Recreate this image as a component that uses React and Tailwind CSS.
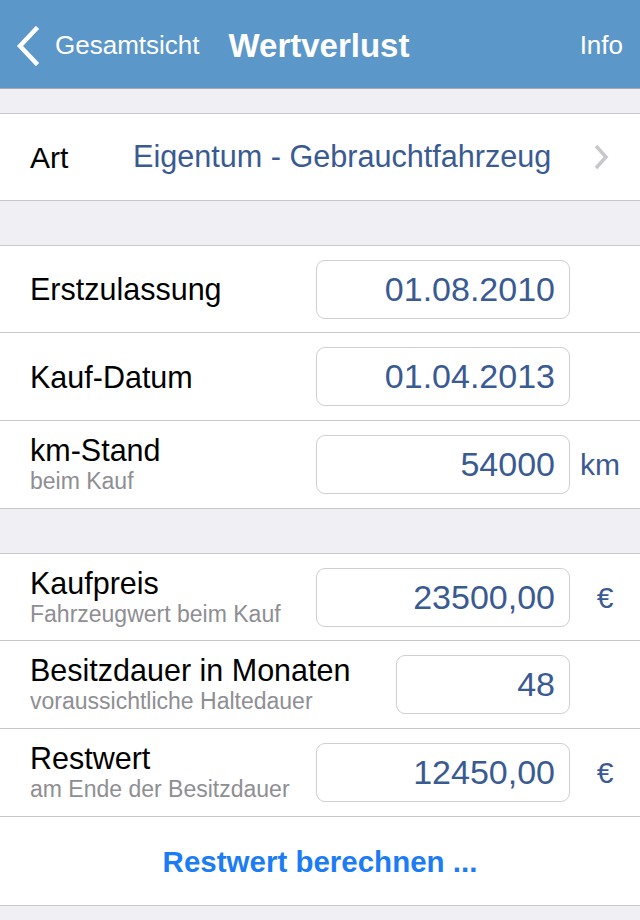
const rowsA = [
  { label: 'Erstzulassung', value: '01.08.2010', h: 'h-[87px]' },
  { label: 'Kauf-Datum', value: '01.04.2013', h: 'h-[88px]' },
  { label: 'km-Stand', sub: 'beim Kauf', value: '54000', unit: 'km', h: 'h-[87px]' },
]

const rowsB = [
  { label: 'Kaufpreis', sub: 'Fahrzeugwert beim Kauf', value: '23500,00', unit: '€', h: 'h-[87px]' },
  { label: 'Besitzdauer in Monaten', sub: 'voraussichtliche Haltedauer', value: '48', narrow: true, h: 'h-[88px]' },
  { label: 'Restwert', sub: 'am Ende der Besitzdauer', value: '12450,00', unit: '€', h: 'h-[88px]' },
]

function BackChevron() {
  return (
    <svg width="28" height="40" viewBox="0 0 28 40" className="shrink-0">
      <path d="M22 3 L6 20 L22 37" fill="none" stroke="#ffffff" strokeWidth="4.5" strokeLinecap="square" />
    </svg>
  )
}

function Row({ row, last }) {
  return (
    <div className={'flex items-center pl-[30px] ' + row.h + (last ? '' : ' border-b border-[#c8c7cc]')}>
      <div className="flex-1 min-w-0">
        <div className="text-[30.5px] leading-[34px] text-black whitespace-nowrap">{row.label}</div>
        {row.sub && (
          <div className="text-[23px] leading-[29px] text-[#8e8e93] whitespace-nowrap">{row.sub}</div>
        )}
      </div>
      <div
        className={
          'h-[59px] rounded-[9px] border border-[#cfcfd3] flex items-center justify-end pr-[14px] text-[34px] text-[#3a5a92] ' +
          (row.narrow ? 'w-[174px]' : 'w-[254px]')
        }
      >
        {row.value}
      </div>
      {row.unit === 'km' ? (
        <div className="w-[70px] pl-[10px] text-[30px] text-[#3a5a92]">km</div>
      ) : (
        <div className="w-[70px] text-center text-[30px] text-[#3a5a92]">{row.unit || ''}</div>
      )}
    </div>
  )
}

export default function App() {
  return (
    <div className="w-[640px] h-[920px] bg-[#efeff4] overflow-hidden font-['Liberation_Sans',Arial,sans-serif]">
      <div className="h-[89px] bg-[#5b97c9] border-b border-[#a9a9ad] flex items-center pt-[3px] pl-[14px] pr-[17px] text-white">
        <BackChevron />
        <span className="ml-[13px] text-[26px]">Gesamtsicht</span>
        <span className="ml-[29px] text-[33px] font-bold">Wertverlust</span>
        <span className="ml-auto text-[26px]">Info</span>
      </div>

      <div className="h-[24px]" />
      <div className="bg-white border-y border-[#c8c7cc] h-[88px] flex items-center pl-[30px]">
        <span className="w-[103px] text-[30px] text-black">Art</span>
        <span className="text-[30.6px] text-[#3a5a92] whitespace-nowrap">Eigentum - Gebrauchtfahrzeug</span>
        <svg width="16" height="26" viewBox="0 0 16 26" className="ml-auto mr-[31px]">
          <path d="M3 2 L13 13 L3 24" fill="none" stroke="#c7c7cc" strokeWidth="3.5" />
        </svg>
      </div>

      <div className="h-[44px]" />
      <div className="bg-white border-y border-[#c8c7cc]">
        {rowsA.map((r, i) => (
          <Row key={r.label} row={r} last={i === rowsA.length - 1} />
        ))}
      </div>

      <div className="h-[44px]" />
      <div className="bg-white border-y border-[#c8c7cc]">
        {rowsB.map((r) => (
          <Row key={r.label} row={r} />
        ))}
        <div className="h-[88px] flex items-center justify-center pt-[2px] text-[29.5px] font-bold text-[#1c7cf4]">
          Restwert berechnen ...
        </div>
      </div>
    </div>
  )
}
